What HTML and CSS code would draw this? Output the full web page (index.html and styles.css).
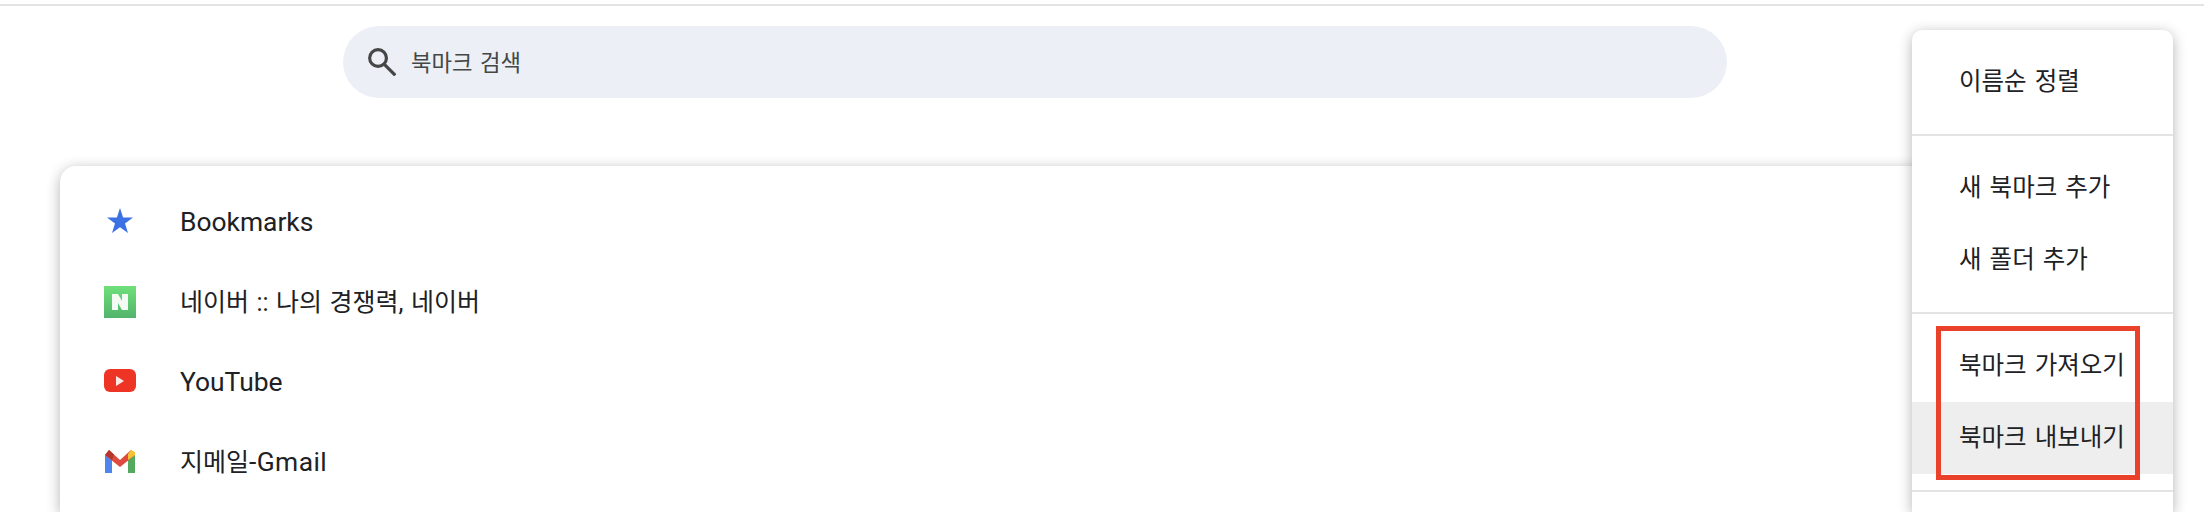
FILE: index.html
```html
<!DOCTYPE html>
<html lang="ko">
<head>
    <meta charset="UTF-8">
    <title>북마크</title>
    <link rel="stylesheet" href="styles.css">
</head>
<body>
    <div class="toolbar">
        <div class="search-box">
            <svg class="search-icon" viewBox="0 0 24 24"><circle cx="8.6" cy="8.6" r="7.2" fill="none" stroke="#444746" stroke-width="2.7"/><path d="M13.8 13.8 L23.4 23.4" stroke="#444746" stroke-width="2.8" fill="none"/></svg>
            <span class="search-text">북마크 검색</span>
        </div>
    </div>

    <div class="bookmark-list">
        <div class="bookmark-row">
            <svg class="favicon" viewBox="0 0 32 32"><path d="M16 2 L19.1 11.6 L29 11.6 L21 17.6 L24 27 L16 21.2 L8 27 L11 17.6 L3 11.6 L12.9 11.6 Z" fill="#3b71e2"/></svg>
            <span class="latin">Bookmarks</span>
        </div>
        <div class="bookmark-row">
            <svg class="favicon" viewBox="0 0 32 32">
                <defs><linearGradient id="naver-bg" x1="0" y1="0" x2="0" y2="1"><stop offset="0" stop-color="#6fe07a"/><stop offset="1" stop-color="#52b36b"/></linearGradient></defs>
                <rect width="32" height="32" fill="url(#naver-bg)"/>
                <path d="M8 8 H14 L18 15 V8 H24 V24 H18 L14 17 V24 H8 Z" fill="#f4fbf4"/>
            </svg>
            <span class="hangul">네이버 :: 나의 경쟁력, 네이버</span>
        </div>
        <div class="bookmark-row">
            <svg class="favicon" viewBox="0 0 32 32"><rect x="0" y="3" width="32" height="23" rx="6" fill="#ee3425"/><path d="M12 10 L20 15 L12 20 Z" fill="#fbe9e7"/></svg>
            <span class="latin">YouTube</span>
        </div>
        <div class="bookmark-row">
            <svg class="favicon" viewBox="0 0 32 32">
                <path d="M1 9 V27 H8 V14 Z" fill="#4f86ec"/>
                <path d="M31 9 V27 H24 V14 Z" fill="#55a85f"/>
                <path d="M1 9 L5 4 L16 14 L27 4 L31 9 L16 21 Z" fill="#dd4b3e"/>
                <path d="M1 9 L5 4 L10 8.5 L8 14 Z" fill="#b9342c"/>
                <path d="M24 14 L24 8 L27 4 L31 6 V9 Z" fill="#f5c233"/>
            </svg>
            <span class="hangul">지메일<span class="latin gmail">-Gmail</span></span>
        </div>
    </div>

    <div class="menu">
        <div class="menu-group">
            <div class="menu-item">이름순 정렬</div>
        </div>
        <div class="menu-group">
            <div class="menu-item">새 북마크 추가</div>
            <div class="menu-item">새 폴더 추가</div>
        </div>
        <div class="menu-group">
            <div class="menu-item">북마크 가져오기</div>
            <div class="menu-item active">북마크 내보내기</div>
        </div>
        <div class="menu-group"></div>
        <div class="callout"></div>
    </div>
</body>
</html>
```

FILE: styles.css
```css
* {
    margin: 0;
    padding: 0;
    box-sizing: border-box;
}

body {
    width: 2204px;
    height: 512px;
    overflow: hidden;
    position: relative;
    background: white;
    color: #202124;
    font-family: Roboto, "Noto Sans CJK KR", sans-serif;
    font-size: 24.5px;
    word-spacing: 2px;
    padding-top: 4px;
}

.toolbar {
    height: 162px;
    border-top: 2px solid #e3e3e3;
    padding: 20px 0 0 343px;
}

.search-box {
    width: 1384px;
    height: 72px;
    border-radius: 36px;
    background: #eceff6;
    display: flex;
    align-items: center;
    gap: 15px;
    padding-left: 25px;
}

.search-icon {
    width: 28px;
    height: 28px;
}

.search-text {
    font-size: 22.3px;
    color: #444746;
    padding-bottom: 2px;
}

.bookmark-list {
    width: 2080px;
    height: 346px;
    margin-left: 60px;
    padding-top: 16px;
    border-radius: 16px 16px 0 0;
    background: white;
    box-shadow: 0 3px 14px rgba(0, 0, 0, 0.3);
}

.bookmark-row {
    height: 80px;
    display: flex;
    align-items: center;
    gap: 44px;
    padding-left: 44px;
}

.latin {
    font-size: 26.4px;
}

.gmail {
    letter-spacing: 0.4px;
}

.hangul {
    font-size: 25px;
    word-spacing: 1.3px;
    padding-bottom: 5px;
}

.favicon {
    width: 32px;
    height: 32px;
    filter: blur(0.5px);
}

.menu {
    position: absolute;
    top: 30px;
    left: 1912px;
    width: 261px;
    height: 482px;
    background: white;
    border-radius: 10px 10px 0 0;
    box-shadow: 0 3px 14px rgba(0, 0, 0, 0.3);
}

.menu-group {
    padding: 16px 0;
    border-bottom: 2px solid #e3e3e3;
}

.menu-item {
    height: 72px;
    display: flex;
    align-items: center;
    padding: 0 0 5px 47px;
}

.menu-item.active {
    background: #eeeeee;
}

.callout {
    position: absolute;
    top: 296px;
    left: 24px;
    width: 204px;
    height: 154px;
    border: 5px solid #e9412a;
}
```
